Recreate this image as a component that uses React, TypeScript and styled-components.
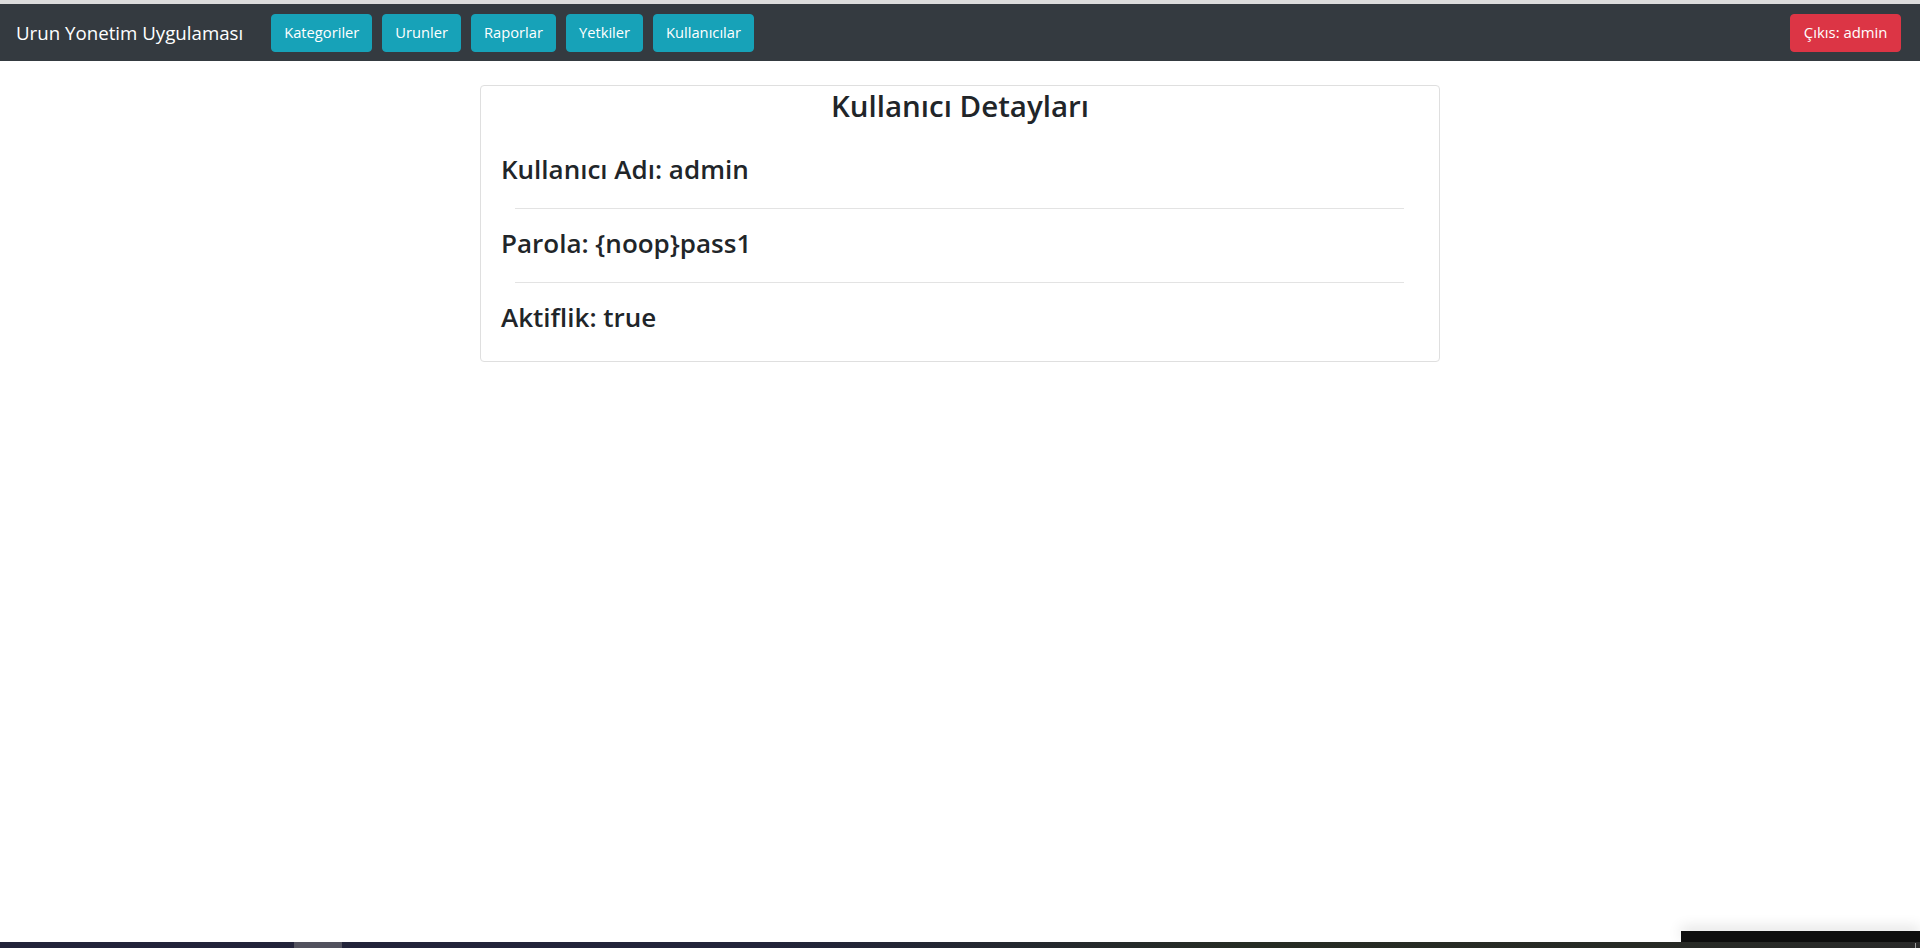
import React from "react";
import styled, { createGlobalStyle } from "styled-components";

const GlobalStyle = createGlobalStyle`
  html, body {
    margin: 0;
    padding: 0;
    background: #ffffff;
    font-family: "Open Sans", "Noto Sans", "Liberation Sans", sans-serif;
    color: #212529;
  }
  * { box-sizing: border-box; }
`;

const Page = styled.div`
  min-height: 948px;
  display: flex;
  flex-direction: column;
  border-top: 4px solid #dcdcdc;
`;

const NavBar = styled.nav`
  height: 57px;
  background: #343a40;
  display: flex;
  align-items: center;
  padding: 0 19px 0 16px;
`;

const Brand = styled.a`
  color: #ffffff;
  font-size: 18.7px;
  margin-right: 28px;
  white-space: nowrap;
`;

const NavGroup = styled.div`
  display: flex;
  gap: 10px;
`;

const Spacer = styled.div`
  flex: 1;
`;

const Btn = styled.button<{ $variant: "info" | "danger" }>`
  height: 38px;
  padding: 0 12px;
  border: 1px solid ${(p) => (p.$variant === "info" ? "#17a2b8" : "#dc3545")};
  background: ${(p) => (p.$variant === "info" ? "#17a2b8" : "#dc3545")};
  color: #ffffff;
  border-radius: 4px;
  font-family: "Open Sans", "Noto Sans", sans-serif;
  font-size: 14.7px;
  line-height: 1;
  cursor: pointer;
`;

const DangerBtn = styled(Btn)`
  padding: 0 12.5px;
  font-size: 14.9px;
`;

const Main = styled.main`
  display: flex;
  justify-content: center;
  padding-top: 24px;
`;

const Card = styled.section`
  width: 960px;
  border: 1px solid #dfdfdf;
  border-radius: 4px;
  padding: 0 20px 26px;
`;

const Title = styled.h2`
  margin: 0;
  text-align: center;
  font-size: 29.5px;
  font-weight: 600;
  line-height: 36px;
  padding-top: 2px;
`;

const Row = styled.h3`
  margin: 0;
  font-size: 26px;
  font-weight: 600;
  line-height: 36px;
  padding: 0;
`;

const Divider = styled.hr`
  margin: 21px 15px 16px 14px;
  border: 0;
  border-top: 1px solid #e3e3e3;
`;

const RowList = styled.div`
  padding-top: 27px;
`;

const Taskbar = styled.div`
  position: fixed;
  left: 0;
  right: 0;
  bottom: 0;
  height: 6px;
  background: linear-gradient(90deg, #22233a 0%, #22243a 40%, #262c24 65%, #272a25 85%, #2a2a2a 100%);
`;

const TaskItem = styled.div`
  position: absolute;
  left: 294px;
  top: 0;
  width: 48px;
  height: 6px;
  background: #52525e;
`;

const TaskTick = styled.div`
  position: absolute;
  left: 1915px;
  top: 1px;
  width: 1px;
  height: 5px;
  background: #9a9a9a;
`;

const Popup = styled.div`
  position: fixed;
  right: 0;
  bottom: 6px;
  width: 239px;
  height: 11px;
  background: #0e0e0e;
  box-shadow: 0 -4px 14px rgba(0, 0, 0, 0.12);
`;

const navItems = ["Kategoriler", "Urunler", "Raporlar", "Yetkiler", "Kullanıcılar"];

const rows = ["Kullanıcı Adı: admin", "Parola: {noop}pass1", "Aktiflik: true"];

export default function App() {
  return (
    <>
      <GlobalStyle />
      <Page>
        <NavBar>
          <Brand>Urun Yonetim Uygulaması</Brand>
          <NavGroup>
            {navItems.map((n) => (
              <Btn key={n} $variant="info">
                {n}
              </Btn>
            ))}
          </NavGroup>
          <Spacer />
          <DangerBtn $variant="danger">Çıkıs: admin</DangerBtn>
        </NavBar>
        <Main>
          <Card>
            <Title>Kullanıcı Detayları</Title>
            <RowList>
              {rows.map((r, i) => (
                <React.Fragment key={r}>
                  {i > 0 && <Divider />}
                  <Row>{r}</Row>
                </React.Fragment>
              ))}
            </RowList>
          </Card>
        </Main>
      </Page>
      <Popup />
      <Taskbar>
        <TaskItem />
        <TaskTick />
      </Taskbar>
    </>
  );
}
